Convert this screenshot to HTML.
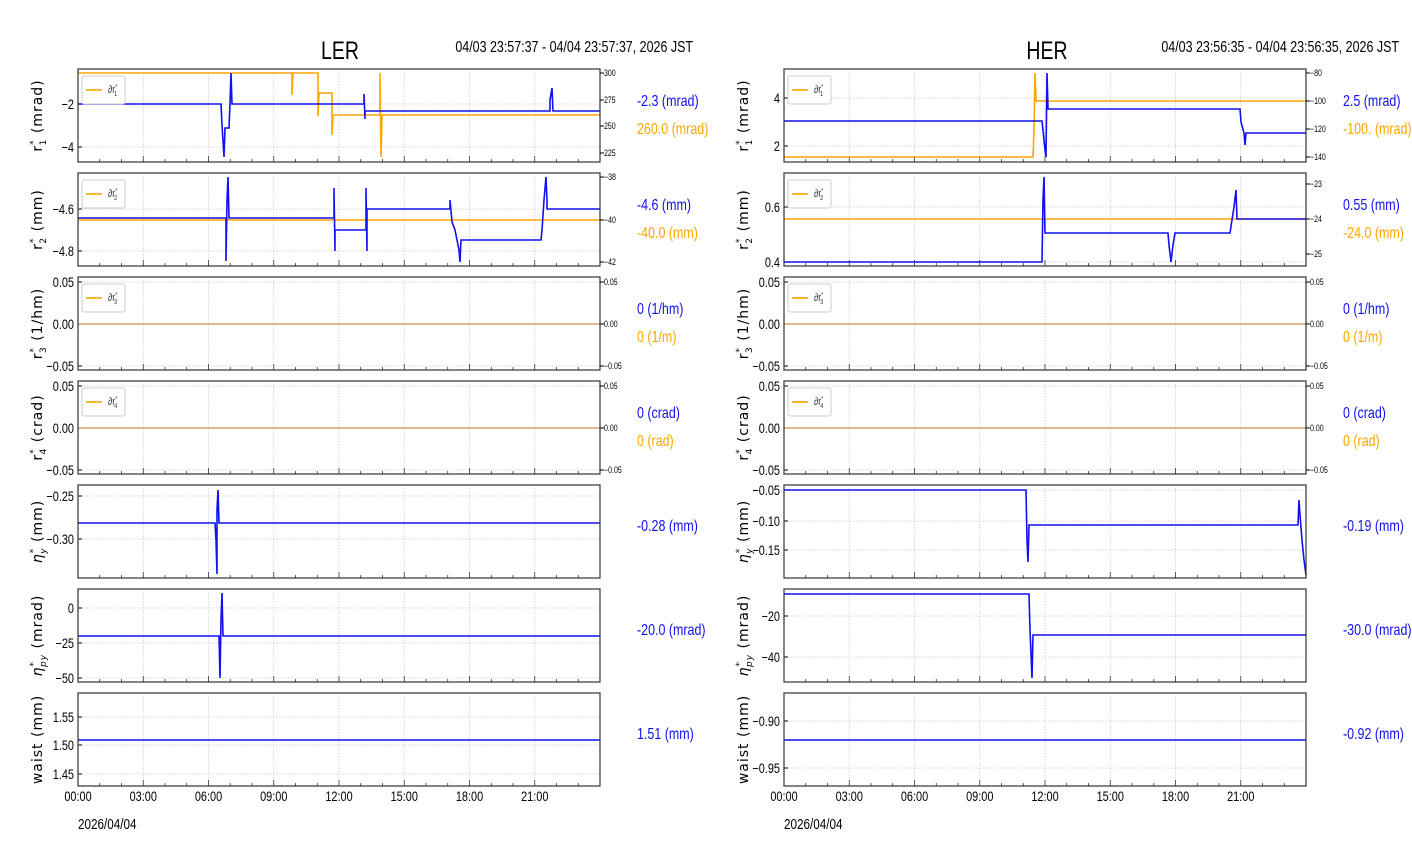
<!DOCTYPE html>
<html><head><meta charset="utf-8"><style>
body{margin:0;background:#fff;width:1412px;height:864px;overflow:hidden}
svg{display:block}
.c{font-family:"Liberation Sans",sans-serif}
.d{font-family:"DejaVu Sans",sans-serif;letter-spacing:1px}
</style></head><body>
<svg id="s" width="1412" height="864" xmlns="http://www.w3.org/2000/svg"></svg>
<script>
const S=document.getElementById('s');let o='';
const B='#1010f0',O='#ffa500';
function ln(x1,y1,x2,y2,c,w,extra){o+=`<line x1="${x1}" y1="${y1}" x2="${x2}" y2="${y2}" stroke="${c}" stroke-width="${w}" ${extra||''}/>`;}
function tx(x,y,t,sz,c,anc){o+=`<text transform="translate(${x},${y}) scale(0.78,1)" font-size="${sz}" fill="${c}" text-anchor="${anc||'start'}" class="c">${t}</text>`;}
function pl(pts,c){o+=`<polyline points="${pts.map(p=>p.join(',')).join(' ')}" fill="none" stroke="${c}" stroke-width="1.6"/>`;}
function panel(x0,y0,yt,rt,lines,ylab,rtexts,leg,xlab){
 const w=522,h=93,x1=x0+w,y1=y0+h;
 for(let i=1;i<8;i++){const x=x0+i*w/8;ln(x,y0,x,y1,'#ccc',0.8,'stroke-dasharray="1.5,1.5"');}
 yt.forEach(t=>{ln(x0,t[0],x1,t[0],'#ccc',0.8,'stroke-dasharray="1.5,1.5"');ln(x0,t[0],x0+4,t[0],'#000',1);tx(x0-4,t[0]+5,t[1],14,'#000','end');});
 for(let i=0;i<=24;i++){const x=x0+i*w/24;ln(x,y1,x,y1-(i%3==0?6:3),'#333',0.8);}
 lines.forEach(l=>pl(l[1],l[0]));
 o+=`<rect x="${x0}" y="${y0}" width="${w}" height="${h}" fill="none" stroke="#333" stroke-width="1.2"/>`;
 if(rt) rt.forEach(t=>{ln(x1,t[0],x1+4,t[0],'#000',1);tx(x1+4,t[0]+3,t[1],9,'#000');});
 o+=`<text transform="translate(${x0-36},${y0+h/2}) rotate(-90)" font-size="14" text-anchor="middle" class="d" fill="#000">${ylab}</text>`;
 rtexts.forEach(r=>tx(x1+37,r[0],r[1],16,r[2]));
 if(leg){o+=`<rect x="${x0+4}" y="${y0+7}" width="43" height="28" rx="2" fill="#fff" stroke="#ccc"/>`;ln(x0+8,y0+21,x0+24,y0+21,O,1.6);tx(x0+30,y0+24,leg,11,'#333');}
 if(xlab){['00:00','03:00','06:00','09:00','12:00','15:00','18:00','21:00'].forEach((t,i)=>tx(x0+i*w/8,y1+15,t,14,'#000','middle'));tx(x0,y1+43,'2026/04/04',15,'#000');}
}
const yl=(a,b,u)=>`${a}<tspan dy="-6" font-size="9">*</tspan><tspan dx="-6" dy="10" font-size="9">${b}</tspan><tspan dy="-4"> ${u}</tspan>`;
const ylI=(b,u)=>`<tspan font-style="italic">η</tspan><tspan dy="-6" font-size="9">*</tspan><tspan dx="-6" dy="10" font-size="9" font-style="italic">${b}</tspan><tspan dy="-4"> ${u}</tspan>`;
const lg=n=>`∂r<tspan dy="-4" font-size="7">*</tspan><tspan dx="-4" dy="7" font-size="7">${n}</tspan>`;
const BR='#d8a070';
let X=78;
panel(X,69,[[104,'−2'],[147,'−4']],[[73,'300'],[100,'275'],[126,'250'],[153,'225']],
 [[O,[[78,73],[292,73],[292,95],[293,73],[318,73],[318,116],[319,93],[332,93],[332,135],[333,115],[380,115],[380,73],[381,157],[382,115],[600,115]]],
  [B,[[78,104],[221,104],[222,125],[224,157],[225,128],[229,128],[230,104],[231,73],[232,104],[364,104],[364,94],[365,119],[365,111],[550,111],[550,100],[552,88],[553,111],[600,111]]]],
 yl('r','1','(mrad)'),[[106,'-2.3 (mrad)',B],[134,'260.0 (mrad)',O]],lg('1'));
panel(X,173,[[209,'−4.6'],[251,'−4.8']],[[177,'−38'],[220,'−40'],[262,'−42']],
 [[O,[[78,220],[600,220]]],
  [B,[[78,218],[226,218],[226,261],[227,200],[228,177],[229,218],[334,218],[334,188],[335,251],[335,230],[366,230],[366,188],[367,251],[367,209],[450,209],[450,200],[452,222],[455,230],[457,240],[459,250],[460,262],[461,240],[541,240],[542,230],[544,200],[546,177],[547,200],[547,209],[600,209]]]],
 yl('r','2','(mm)'),[[210,'-4.6 (mm)',B],[238,'-40.0 (mm)',O]],lg('2'));
panel(X,277,[[282,'0.05'],[324,'0.00'],[366,'−0.05']],[[282,'0.05'],[324,'0.00'],[366,'−0.05']],
 [[BR,[[78,324],[600,324]]]],yl('r','3','(1/hm)'),[[314,'0 (1/hm)',B],[342,'0 (1/m)',O]],lg('3'));
panel(X,381,[[386,'0.05'],[428,'0.00'],[470,'−0.05']],[[386,'0.05'],[428,'0.00'],[470,'−0.05']],
 [[BR,[[78,428],[600,428]]]],yl('r','4','(crad)'),[[418,'0 (crad)',B],[446,'0 (rad)',O]],lg('4'));
panel(X,485,[[496,'−0.25'],[539,'−0.30']],null,
 [[B,[[78,523],[215,523],[216,540],[217,574],[217,510],[218,490],[219,523],[600,523]]]],ylI('y','(mm)'),[[531,'-0.28 (mm)',B]]);
panel(X,589,[[608,'0'],[643,'−25'],[678,'−50']],null,
 [[B,[[78,636],[219,636],[220,678],[221,620],[222,593],[223,636],[600,636]]]],ylI('py','(mrad)'),[[635,'-20.0 (mrad)',B]]);
panel(X,693,[[717,'1.55'],[745,'1.50'],[774,'1.45']],null,
 [[B,[[78,740],[600,740]]]],'waist (mm)',[[739,'1.51 (mm)',B]],null,true);
tx(340,59,'LER',25,'#000','middle');tx(693,52,'04/03 23:57:37 - 04/04 23:57:37, 2026 JST',16,'#000','end');
X=784;
panel(X,69,[[98,'4'],[146,'2']],[[73,'−80'],[101,'−100'],[129,'−120'],[157,'−140']],
 [[O,[[784,157],[1033,157],[1034,130],[1035,73],[1036,101],[1306,101]]],
  [B,[[784,121],[1042,121],[1043,130],[1045,150],[1046,157],[1047,73],[1048,109],[1240,109],[1241,122],[1244,133],[1245,145],[1246,133],[1306,133]]]],
 yl('r','1','(mrad)'),[[106,'2.5 (mrad)',B],[134,'-100. (mrad)',O]],lg('1'));
panel(X,173,[[207,'0.6'],[262,'0.4']],[[184,'−23'],[219,'−24'],[254,'−25']],
 [[O,[[784,219],[1306,219]]],
  [B,[[784,262],[1042,262],[1043,200],[1044,177],[1045,233],[1168,233],[1169,245],[1171,262],[1173,245],[1175,233],[1230,233],[1232,220],[1234,207],[1236,190],[1237,219],[1306,219]]]],
 yl('r','2','(mm)'),[[210,'0.55 (mm)',B],[238,'-24.0 (mm)',O]],lg('2'));
panel(X,277,[[282,'0.05'],[324,'0.00'],[366,'−0.05']],[[282,'0.05'],[324,'0.00'],[366,'−0.05']],
 [[BR,[[784,324],[1306,324]]]],yl('r','3','(1/hm)'),[[314,'0 (1/hm)',B],[342,'0 (1/m)',O]],lg('3'));
panel(X,381,[[386,'0.05'],[428,'0.00'],[470,'−0.05']],[[386,'0.05'],[428,'0.00'],[470,'−0.05']],
 [[BR,[[784,428],[1306,428]]]],yl('r','4','(crad)'),[[418,'0 (crad)',B],[446,'0 (rad)',O]],lg('4'));
panel(X,485,[[490,'−0.05'],[521,'−0.10'],[550,'−0.15']],null,
 [[B,[[784,490],[1026,490],[1027,540],[1028,562],[1029,525],[1298,525],[1299,500],[1300,515],[1302,540],[1304,560],[1306,575]]]],ylI('y','(mm)'),[[531,'-0.19 (mm)',B]]);
panel(X,589,[[616,'−20'],[657,'−40']],null,
 [[B,[[784,594],[1029,594],[1030,630],[1032,678],[1033,635],[1306,635]]]],ylI('py','(mrad)'),[[635,'-30.0 (mrad)',B]]);
panel(X,693,[[721,'−0.90'],[768,'−0.95']],null,
 [[B,[[784,740],[1306,740]]]],'waist (mm)',[[739,'-0.92 (mm)',B]],null,true);
tx(1047,59,'HER',25,'#000','middle');tx(1399,52,'04/03 23:56:35 - 04/04 23:56:35, 2026 JST',16,'#000','end');
S.innerHTML=o;
</script>
</body></html>
